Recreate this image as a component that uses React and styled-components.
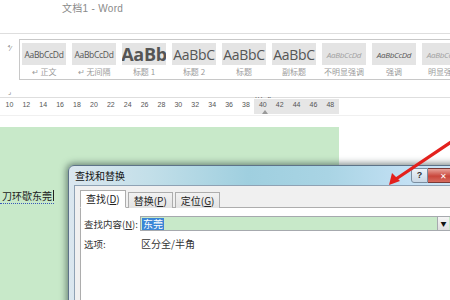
import React from "react";
import styled, { createGlobalStyle } from "styled-components";

const GlobalStyle = createGlobalStyle`
  html, body { margin: 0; padding: 0; }
  body {
    font-family: "Noto Sans CJK SC", "Liberation Sans", sans-serif;
    background: #fff;
  }
`;

const styles = [
  { sample: "AaBbCcDd", name: "↵ 正文", size: 8.5 },
  { sample: "AaBbCcDd", name: "↵ 无间隔", size: 8.5 },
  { sample: "AaBb", name: "标题 1", size: 18, bold: true },
  { sample: "AaBbC", name: "标题 2", size: 14 },
  { sample: "AaBbC", name: "标题", size: 14 },
  { sample: "AaBbC", name: "副标题", size: 14 },
  { sample: "AaBbCcDd", name: "不明显强调", size: 8, italic: true, faded: true },
  { sample: "AaBbCcDd", name: "强调", size: 8, italic: true },
  { sample: "AaBbCcDd", name: "明显强调", size: 8, italic: true, faded: true },
];

const rulerNums = [10, 12, 14, 16, 18, 20, 22, 24, 26, 28, 30, 32, 34, 36, 38, 40, 42, 44, 46, 48];

export default function App() {
  return (
    <Screen>
      <GlobalStyle />
      <WindowTitle>文档1 - Word</WindowTitle>

      <Ribbon>
        <RibbonRow>
          <SideTools>
            <SmallGlyph>⁴⁄</SmallGlyph>
            <SmallGlyph>⌟</SmallGlyph>
          </SideTools>
          <Gallery>
            {styles.map((s, i) => (
              <StyleItem key={i}>
                <Sample
                  $size={s.size}
                  $bold={s.bold}
                  $italic={s.italic}
                  $faded={s.faded}
                >
                  {s.sample}
                </Sample>
                <StyleName>{s.name}</StyleName>
              </StyleItem>
            ))}
          </Gallery>
        </RibbonRow>
        <GroupLabel>样式</GroupLabel>
      </Ribbon>

      <Ruler>
        <RulerTrack>
          {rulerNums.map((n) => (
            <RulerNum key={n} $margin={n >= 40}>
              {n}
            </RulerNum>
          ))}
          <IndentMark />
        </RulerTrack>
      </Ruler>

      <DocArea>
        <Page>
          <DocText>
            刀环歇东莞<Caret />
          </DocText>
        </Page>
      </DocArea>

      <Dialog>
        <DialogTitleBar>
          <DialogTitle>查找和替换</DialogTitle>
          <CaptionButtons>
            <HelpButton>?</HelpButton>
            <CloseButton>✕</CloseButton>
          </CaptionButtons>
        </DialogTitleBar>
        <DialogBody>
          <Tabs>
            <Tab $active>查找(<u>D</u>)</Tab>
            <Tab>替换(<u>P</u>)</Tab>
            <Tab>定位(<u>G</u>)</Tab>
          </Tabs>
          <Panel>
            <FieldRow>
              <FieldLabel>查找内容(<u>N</u>):</FieldLabel>
              <ComboBox>
                <Selected>东莞</Selected>
                <DropButton>▼</DropButton>
              </ComboBox>
            </FieldRow>
            <FieldRow>
              <FieldLabel>选项:</FieldLabel>
              <OptionText>区分全/半角</OptionText>
            </FieldRow>
          </Panel>
        </DialogBody>
      </Dialog>

      <ArrowLayer width="450" height="300" viewBox="0 0 450 300">
        <line x1="466" y1="132" x2="396" y2="179" stroke="#e3211d" strokeWidth="3.2" strokeLinecap="round" />
        <polygon points="389,185 392,173 400,181" fill="#e3211d" />
      </ArrowLayer>
    </Screen>
  );
}

const Screen = styled.div`
  position: relative;
  width: 450px;
  height: 300px;
  overflow: hidden;
  background: #fff;
  display: flex;
  flex-direction: column;
`;

const WindowTitle = styled.div`
  height: 33px;
  padding: 0 0 0 62px;
  box-sizing: border-box;
  font-family: "Liberation Sans", "Noto Sans CJK SC", sans-serif;
  font-size: 10px;
  color: #8a8a8a;
  letter-spacing: 0.3px;
`;

const Ribbon = styled.div`
  height: 65px;
  border-top: 1px solid #dedede;
  border-bottom: 1px solid #dedede;
  box-sizing: border-box;
  display: flex;
  flex-direction: column;
  background: #fff;
`;

const RibbonRow = styled.div`
  display: flex;
  padding-top: 5px;
`;

const SideTools = styled.div`
  width: 19px;
  display: flex;
  flex-direction: column;
  justify-content: space-between;
  align-items: center;
  height: 56px;
  padding-top: 6px;
  box-sizing: border-box;
`;

const SmallGlyph = styled.span`
  font-size: 7px;
  color: #777;
  line-height: 1;
`;

const Gallery = styled.div`
  flex: 1;
  height: 41px;
  border: 1px solid #c8c8c8;
  border-right: none;
  box-sizing: border-box;
  display: flex;
  gap: 6px;
  padding: 3px 0 0 2px;
  overflow: hidden;
`;

const StyleItem = styled.div`
  flex: 0 0 44px;
  display: flex;
  flex-direction: column;
  align-items: center;
`;

const Sample = styled.div`
  width: 44px;
  height: 22px;
  background: #e4e4e4;
  display: flex;
  align-items: center;
  justify-content: center;
  overflow: hidden;
  white-space: nowrap;
  font-family: "Open Sans", "Liberation Sans", sans-serif;
  font-size: ${(p) => p.$size}px;
  font-weight: ${(p) => (p.$bold ? 700 : 400)};
  font-style: ${(p) => (p.$italic ? "italic" : "normal")};
  color: ${(p) => (p.$faded ? "#a0a0a0" : "#555")};
  letter-spacing: -0.3px;
`;

const StyleName = styled.div`
  font-size: 8px;
  color: #9a9a9a;
  margin-top: 1px;
  white-space: nowrap;
`;

const GroupLabel = styled.div`
  padding-left: 254px;
  font-size: 9px;
  color: #555;
`;

const Ruler = styled.div`
  height: 17px;
  background: #fff;
  border-bottom: 1px solid #f0f0f0;
`;

const RulerTrack = styled.div`
  position: relative;
  width: 340px;
  height: 15px;
  margin-top: 1px;
  display: flex;
  padding-left: 1px;
  box-sizing: border-box;
`;

const RulerNum = styled.span`
  flex: 0 0 16.9px;
  text-align: center;
  font-family: "Liberation Sans", sans-serif;
  font-size: 7px;
  line-height: 12px;
  color: #555;
  background: ${(p) => (p.$margin ? "#e6e6e6" : "transparent")};
`;

const IndentMark = styled.span`
  position: absolute;
  left: 262px;
  top: 11px;
  width: 0;
  height: 0;
  border-left: 3px solid transparent;
  border-right: 3px solid transparent;
  border-bottom: 4px solid #999;
`;

const DocArea = styled.div`
  flex: 1;
  padding-top: 11px;
  background: #fff;
  display: flex;
`;

const Page = styled.div`
  width: 339px;
  background: #c8e9c9;
  padding-top: 54px;
  box-sizing: border-box;
`;

const DocText = styled.div`
  font-size: 10px;
  color: #222;
  display: inline-flex;
  align-items: center;
  border-bottom: 1px dotted #3a57b8;
  padding-left: 2px;
`;

const Caret = styled.span`
  display: inline-block;
  width: 1px;
  height: 11px;
  background: #222;
  margin-left: 1px;
`;

const Dialog = styled.div`
  position: absolute;
  left: 68px;
  top: 165px;
  width: 400px;
  height: 150px;
  border: 1px solid #5d7388;
  border-radius: 6px 6px 0 0;
  background: linear-gradient(90deg, #dbe7ef 0%, #c3dfe9 20%, #9fcfdf 45%, #a9d4e4 65%, #c2e0f4 85%, #d0e6f7 100%);
  box-shadow: 0 0 6px 2px rgba(40, 60, 60, 0.55);
  padding: 0 5px;
  box-sizing: border-box;
`;

const DialogTitleBar = styled.div`
  height: 19px;
  display: flex;
  align-items: center;
  justify-content: space-between;
`;

const DialogTitle = styled.div`
  font-size: 10px;
  color: #111;
  padding-left: 1px;
`;

const CaptionButtons = styled.div`
  display: flex;
  align-self: flex-start;
  margin-right: 3px;
  margin-top: 2px;
`;

const HelpButton = styled.div`
  width: 15px;
  height: 13px;
  border: 1px solid #7b8ea0;
  border-radius: 3px 0 0 3px;
  background: linear-gradient(#eef4f9, #c9d7e4);
  font-family: "Liberation Sans", sans-serif;
  font-size: 9px;
  font-weight: 700;
  color: #333;
  text-align: center;
  line-height: 13px;
`;

const CloseButton = styled.div`
  width: 30px;
  height: 13px;
  border: 1px solid #7a3a36;
  border-left: none;
  border-radius: 0 3px 3px 0;
  background: linear-gradient(#e8a39a, #c9463b 55%, #d66b5e);
  font-size: 8px;
  color: #fff;
  text-align: center;
  line-height: 13px;
`;

const DialogBody = styled.div`
  height: 200px;
  background: #f0f0f0;
  border: 1px solid #8fa2b4;
  padding: 3px 0 0 5px;
  box-sizing: border-box;
`;

const Tabs = styled.div`
  display: flex;
  align-items: flex-end;
  height: 18px;
`;

const Tab = styled.div`
  height: ${(p) => (p.$active ? 18 : 16)}px;
  padding: 0 5px;
  margin-right: 2px;
  border: 1px solid #adadad;
  border-bottom: ${(p) => (p.$active ? "1px solid #fff" : "none")};
  background: ${(p) => (p.$active ? "#fff" : "linear-gradient(#f2f2f2, #e3e3e3)")};
  font-size: 10px;
  color: #222;
  line-height: 16px;
  box-sizing: border-box;
  position: relative;
  z-index: 1;
  margin-bottom: -1px;
`;

const Panel = styled.div`
  background: #fff;
  border: 1px solid #adadad;
  height: 120px;
  padding: 8px 0 0 3px;
  box-sizing: border-box;
  display: flex;
  flex-direction: column;
  gap: 5px;
`;

const FieldRow = styled.div`
  display: flex;
  align-items: center;
  height: 15px;
`;

const FieldLabel = styled.div`
  width: 56px;
  white-space: nowrap;
  font-size: 9.5px;
  color: #333;
`;

const ComboBox = styled.div`
  width: 312px;
  height: 15px;
  border: 1px solid #a6a9ae;
  background: #c8e9c9;
  box-sizing: border-box;
  display: flex;
  align-items: center;
  justify-content: space-between;
  padding-left: 1px;
`;

const Selected = styled.span`
  background: #3b86d6;
  color: #fff;
  font-size: 10px;
  line-height: 12px;
  padding: 0 1px;
`;

const DropButton = styled.div`
  width: 11px;
  height: 13px;
  margin-right: 2px;
  border-left: 1px solid #a6a9ae;
  background: linear-gradient(#f5f5f5, #dedede);
  font-size: 6px;
  color: #111;
  text-align: center;
  line-height: 13px;
`;

const OptionText = styled.div`
  font-size: 10px;
  color: #333;
  padding-left: 1px;
`;

const ArrowLayer = styled.svg`
  position: absolute;
  left: 0;
  top: 0;
  pointer-events: none;
`;
